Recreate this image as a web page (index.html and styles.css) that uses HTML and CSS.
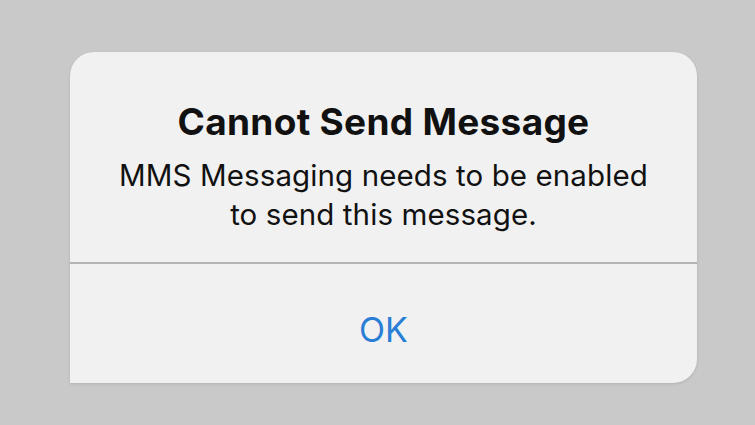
FILE: index.html
```html
<!DOCTYPE html>
<html>
<head>
<meta charset="utf-8">
<link rel="stylesheet" href="styles.css">
</head>
<body>
<div class="alert">
  <div class="alert-body">
    <div class="title">Cannot Send Message</div>
    <div class="message">MMS Messaging needs to be enabled<br>to send this message.</div>
  </div>
  <div class="divider"></div>
  <div class="actions">
    <div class="ok">OK</div>
  </div>
</div>
</body>
</html>
```
FILE: styles.css
```css
html, body {
  margin: 0;
  padding: 0;
}
body {
  width: 755px;
  height: 425px;
  background: #c9c9c9;
  font-family: Inter, "Open Sans", sans-serif;
  overflow: hidden;
  padding-top: 52px;
  padding-left: 70px;
  box-sizing: border-box;
}
.alert {
  width: 627px;
  height: 331px;
  background: #f1f1f1;
  border-radius: 24px 24px 24px 0;
  box-shadow: 0 1px 3px rgba(0,0,0,0.12);
  display: flex;
  flex-direction: column;
}
.alert-body {
  height: 210px;
  display: flex;
  flex-direction: column;
  align-items: center;
  padding-top: 48px;
  box-sizing: border-box;
}
.title {
  font-size: 37px;
  font-weight: 700;
  color: #111;
  line-height: 44px;
  letter-spacing: 0.3px;
}
.message {
  margin-top: 12px;
  font-size: 29.5px;
  line-height: 39px;
  color: #111;
  text-align: center;
  letter-spacing: 0.1px;
}
.divider {
  height: 2px;
  background: #b3b3b3;
}
.actions {
  flex: 1;
  display: flex;
  align-items: center;
  justify-content: center;
}
.ok {
  font-size: 34px;
  color: #2a7ed6;
  margin-top: 12px;
}
```
